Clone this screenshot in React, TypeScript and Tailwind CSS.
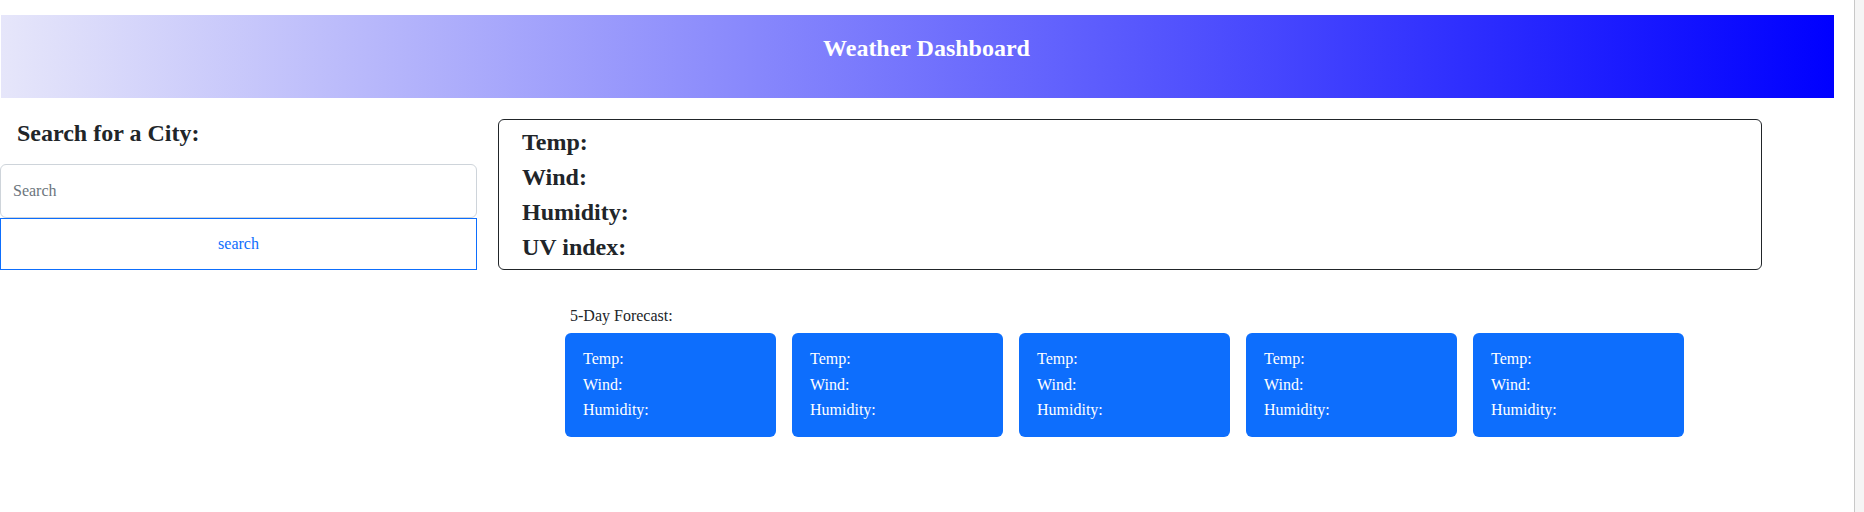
import React from "react";

const days = [1, 2, 3, 4, 5];

export default function App() {
    return (
        <div className="flex min-h-screen bg-white text-[#212529]" style={{ fontFamily: '"Liberation Serif", "Times New Roman", serif' }}>
            <div className="w-[1854px] pt-[15px]">
                {/* header */}
                <header className="ml-[1px] w-[1833px] h-[83px] bg-[linear-gradient(to_right,#e6e6fa,#0000ff)] pt-[19px] pl-[18px] text-center">
                    <h2 className="text-[24px] leading-[28px] font-bold text-white">Weather Dashboard</h2>
                </header>

                <div className="flex items-start mt-[21px]">
                    {/* search column */}
                    <div className="w-[477px] flex flex-col">
                        <h3 className="pl-[17px] text-[24px] leading-[28px] font-bold">Search for a City:</h3>
                        <input
                            type="text"
                            placeholder="Search"
                            className="mt-[17px] h-[54px] w-full border border-[#ced4da] rounded-[6px] pl-[12px] text-[16px] placeholder:text-[#6c757d] outline-none"
                        />
                        <button className="h-[52px] w-full border border-[#0d6efd] bg-white text-[16px] text-[#0d6efd]">search</button>
                    </div>

                    {/* current weather + forecast */}
                    <div className="ml-[21px] flex flex-col">
                        <div className="w-[1264px] h-[151px] border border-[#212529] rounded-[6px] pt-[5px] pl-[23px] text-[24px] leading-[35px] font-bold">
                            <p>Temp:</p>
                            <p>Wind:</p>
                            <p>Humidity:</p>
                            <p>UV index:</p>
                        </div>

                        <div className="ml-[67px] mt-[37px]">
                            <p className="pl-[5px] text-[16px] leading-[18px]">5-Day Forecast:</p>
                            <div className="flex gap-[16px] mt-[8px]">
                                {days.map((d) => (
                                    <div key={d} className="w-[211px] h-[104px] rounded-[6px] bg-[#0d6efd] pt-[13px] pl-[18px] text-[16px] leading-[25.5px] text-white">
                                        <p>Temp:</p>
                                        <p>Wind:</p>
                                        <p>Humidity:</p>
                                    </div>
                                ))}
                            </div>
                        </div>
                    </div>
                </div>
            </div>
            {/* scrollbar strip */}
            <div className="w-[10px] border-l border-[#c8c8c8] bg-[#f5f5f5]"></div>
        </div>
    );
}
